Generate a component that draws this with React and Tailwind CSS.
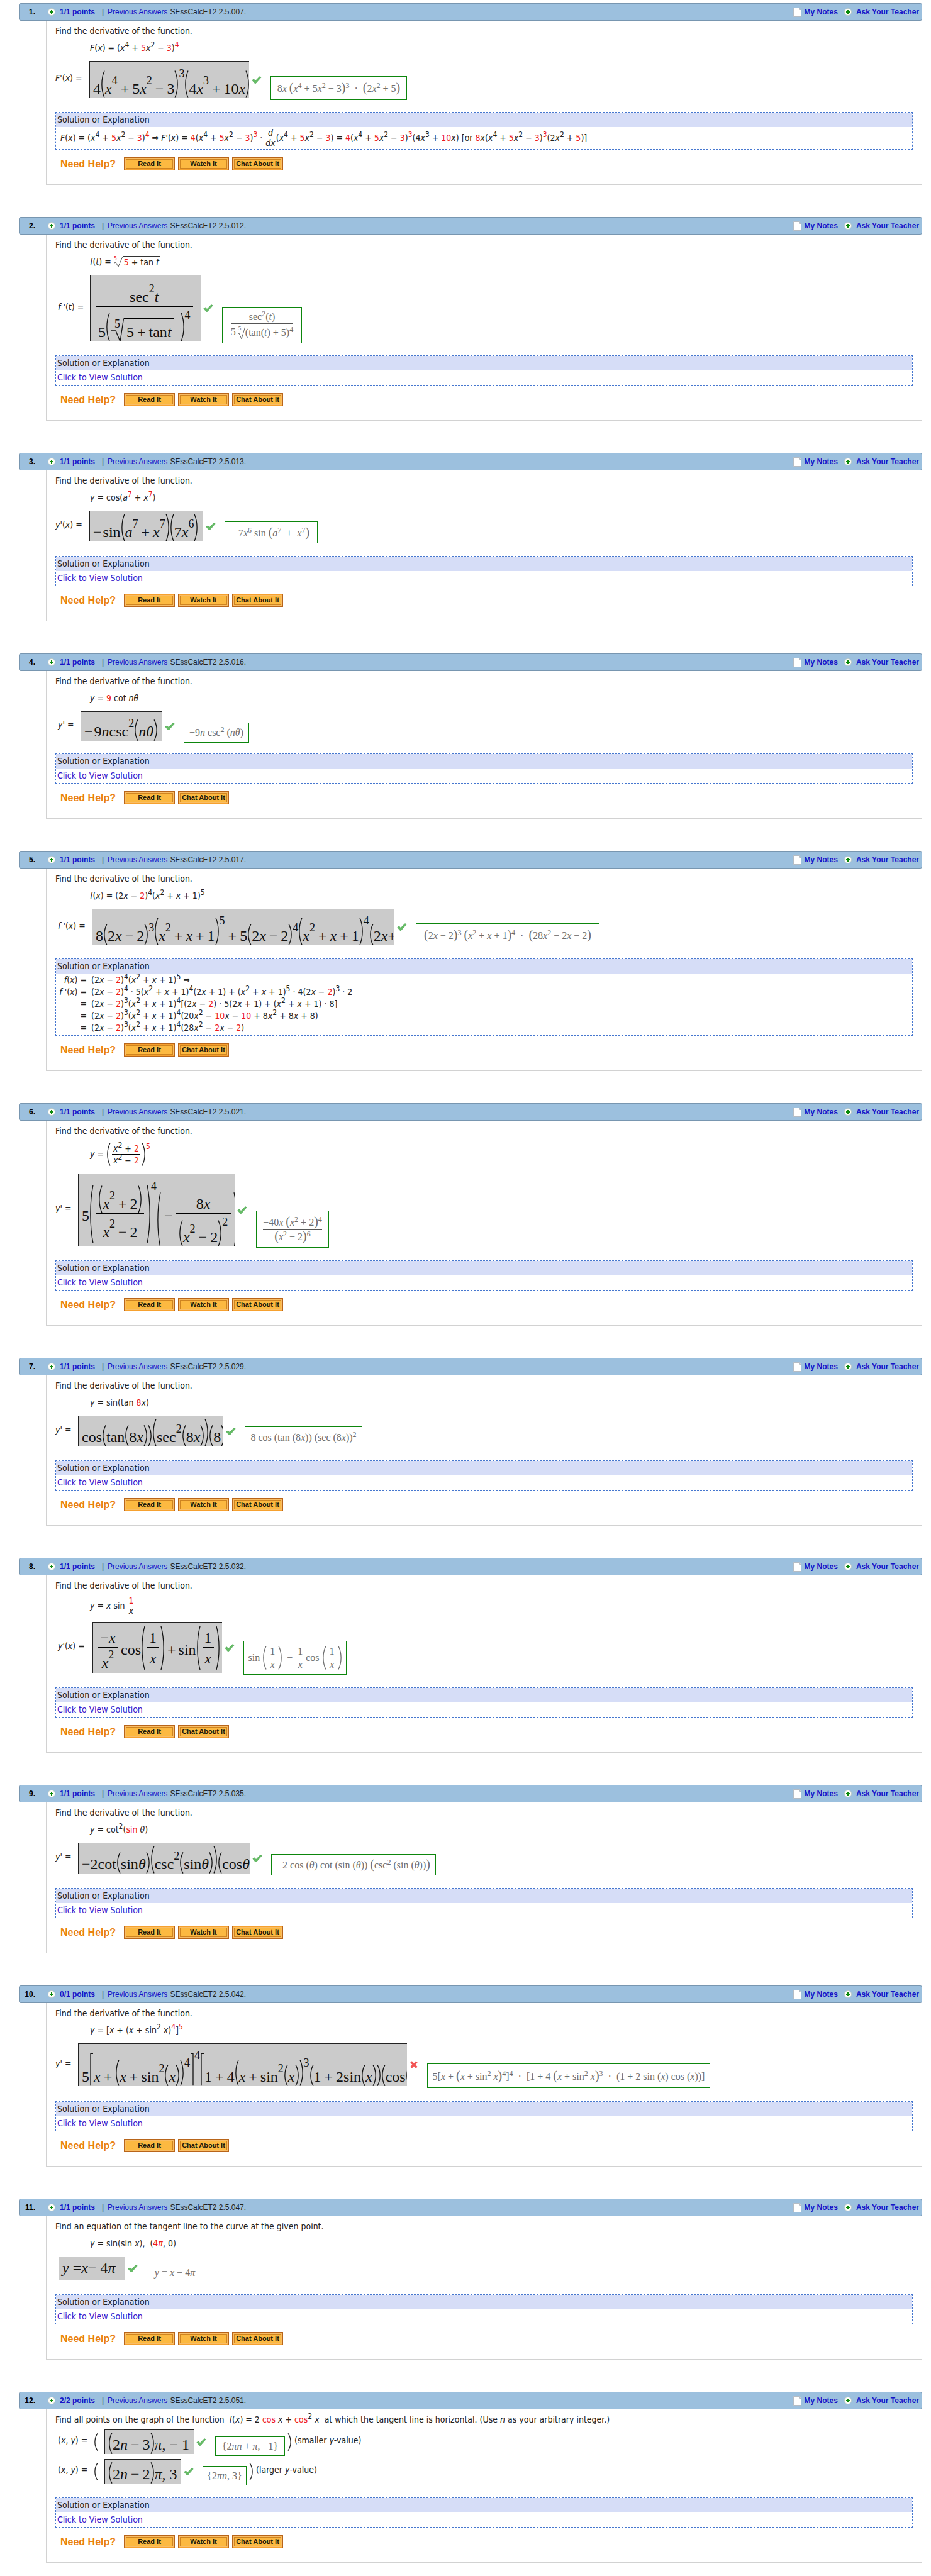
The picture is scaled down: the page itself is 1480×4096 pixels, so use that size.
import React from "react";

/* ---------- inline maths used in running text ---------- */

const Red = ({ children }) => <span className="text-[#ee1c1c]">{children}</span>;
const Up = ({ children }) => <sup className="text-[12px]">{children}</sup>;
const X = () => <i>x</i>;

/* ---------- stretched delimiters and root sign ---------- */

const shapes = {
  "(": "M6 0.5C0.5 12 0.5 28 6 39.5",
  ")": "M1 0.5C6.5 12 6.5 28 1 39.5",
  "[": "M6 1H2V39.5",
  "]": "M1 1H5V39.5",
};

function Fence({ c, h = "h-[34px]" }) {
  return (
    <svg
      role="img"
      aria-label={c}
      viewBox="0 0 7 40"
      preserveAspectRatio="none"
      className={`w-[7px] shrink-0 ${h}`}
    >
      <path d={shapes[c]} fill="none" stroke="currentColor" strokeWidth="1.3" vectorEffect="non-scaling-stroke" />
    </svg>
  );
}

/* ---------- maths inside the grey answer pads ---------- */

const T = ({ children }) => <span className="mb-[3px] leading-6">{children}</span>;
const V = ({ children }) => <i className="mb-[3px] leading-6">{children}</i>;
const Axis = ({ children }) => <span className="mt-[5px] leading-6">{children}</span>;
const Op = ({ children }) => <span className="mx-[5px] mb-[3px] leading-6">{children}</span>;
const Pow = ({ children, at = "mb-[19px]" }) => (
  <span className={`text-[18px] leading-[18px] ${at}`}>{children}</span>
);

function Frac({ top, bottom, h, className = "" }) {
  return (
    <span className={`flex flex-col items-stretch ${className}`}>
      <span className={`flex items-end justify-center border-b border-black ${h}`}>{top}</span>
      <span className={`flex items-end justify-center ${h}`}>{bottom}</span>
    </span>
  );
}

function Pad({ size, align = "items-end", inner = "h-full", children }) {
  return (
    <div className={`shrink-0 overflow-hidden border-l border-t border-[#222] bg-[#cbcbcb] ${size}`}>
      <div
        className={`flex w-max whitespace-nowrap pl-[5px] font-['Liberation_Serif',serif] text-[24px] text-[#111] ${align} ${inner}`}
      >
        {children}
      </div>
    </div>
  );
}

/* ---------- typeset key shown in the green frame ---------- */

const B = ({ children }) => <span className="text-[20px]">{children}</span>;
const K = ({ children }) => <sup className="text-[12px]">{children}</sup>;
const O = ({ children }) => <span className="mx-1">{children}</span>;

function Key({ size, children }) {
  return (
    <div
      className={`-mb-[3px] flex shrink-0 items-center justify-center self-end whitespace-nowrap border border-[#0d860d] font-['Liberation_Serif',serif] text-[16px] leading-5 text-[#6e6e6e] ${size}`}
    >
      {children}
    </div>
  );
}

function KeyFrac({ top, bottom, className = "" }) {
  return (
    <span className={`flex flex-col items-stretch text-center ${className}`}>
      <span className="border-b border-[#555]">{top}</span>
      <span>{bottom}</span>
    </span>
  );
}

/* ---------- small icons ---------- */

const Plus = () => (
  <svg viewBox="0 0 12 12" className="size-3 shrink-0" aria-hidden="true">
    <circle cx="6" cy="6" r="5.6" fill="#fdfdf8" stroke="#b9c6c0" strokeWidth="0.8" />
    <path d="M6 3v6M3 6h6" stroke="#0b8a0b" strokeWidth="2" />
  </svg>
);

const Note = () => (
  <svg viewBox="0 0 13 15" className="h-[15px] w-[13px] shrink-0" aria-hidden="true">
    <path d="M0.5 0.5H9.5L12.5 3.5V14.5H0.5Z" fill="#fff" stroke="#b4bcc4" />
    <path d="M9.5 0.5V3.5H12.5" fill="#dde3e8" stroke="#b4bcc4" />
  </svg>
);

const Check = () => (
  <svg viewBox="0 0 16 12" className="mr-[14px] ml-1 h-3 w-4 shrink-0" role="img" aria-label="Correct">
    <path d="M0.8 6.6L3.6 4.8L6 7.6L12.8 0.6L15.2 1.8L6.6 11.6H5Z" fill="#67bd67" stroke="#3f9f45" strokeWidth="0.6" />
  </svg>
);

const Cross = () => (
  <svg viewBox="0 0 14 12" className="mr-[14px] ml-1 h-3 w-[14px] shrink-0" role="img" aria-label="Incorrect">
    <path d="M2.5 1.5L11.5 10.5M11.5 1.5L2.5 10.5" stroke="#f25555" strokeWidth="3.6" />
  </svg>
);

/* ---------- page blocks ---------- */

const Label = ({ w, children }) => <div className={`shrink-0 whitespace-nowrap pb-1 ${w}`}>{children}</div>;

function HelpButton({ children }) {
  return (
    <button className="h-[21px] w-[81px] cursor-pointer whitespace-nowrap border border-[#b8651a] bg-[#f6a12f] p-[2px] font-['Liberation_Sans',sans-serif] text-[11px] font-bold leading-[13px] text-[#22190a]">
      <span className="block border border-[#cf8420] bg-[#fcb941] outline outline-[#fbd08a]/60">{children}</span>
    </button>
  );
}

function Problem({ p }) {
  return (
    <section>
      <header className="flex h-7 items-center rounded-[3px] border border-[#7896b0] bg-[#9cc0de] pr-1 font-['Liberation_Sans',sans-serif] text-[12px] font-bold text-[#1414c8]">
        <span className="w-[25px] text-right text-black">{p.no}.</span>
        <span className="ml-5">
          <Plus />
        </span>
        <a href="#points" className="ml-[7px] w-[67px]">
          {p.points}
        </a>
        <span className="w-[9px] font-normal text-[#333]">|</span>
        <a href="#previous" className="mr-1 font-normal">
          Previous Answers
        </a>
        <span className="font-normal text-[#222]">SEssCalcET2 2.5.{p.code}.</span>
        <a href="#notes" className="ml-auto flex items-center gap-[5px]">
          <Note />
          My Notes
        </a>
        <a href="#ask" className="ml-[10px] flex items-center gap-[7px]">
          <Plus />
          Ask Your Teacher
        </a>
      </header>
      <div className="ml-[43px] border-x border-b border-[#d2d2d2] px-[14px] pt-[7px] pb-[22px]">
        <p className="h-[18px] whitespace-nowrap leading-[18px]">{p.question || "Find the derivative of the function."}</p>
        {p.formula && (
          <div className={`mb-[3px] flex items-center whitespace-nowrap pl-[55px] ${p.formulaH || "h-9"}`}>
            <div className="flex items-center">{p.formula}</div>
          </div>
        )}
        {p.answer}
        <div className="border border-dashed border-[#4677cf]">
          <h3 className="h-[23px] bg-[#d6ddf7] pl-[2px] leading-[23px]">Solution or Explanation</h3>
          {p.solution || (
            <div className="h-[23px] pl-[2px] leading-[23px]">
              <a href="#solution" className="text-[#3316cc]">
                Click to View Solution
              </a>
            </div>
          )}
        </div>
        <div className="mt-3 flex h-[21px] items-center gap-[5px]">
          <span className="w-[104px] pl-2 font-['Liberation_Sans',sans-serif] text-[16px] font-bold text-[#ea820f]">
            Need Help?
          </span>
          <HelpButton>Read It</HelpButton>
          {p.watch && <HelpButton>Watch It</HelpButton>}
          <HelpButton>Chat About It</HelpButton>
        </div>
      </div>
    </section>
  );
}

/* repeated pieces of problems 1 and 5 */
const Lin = () => (
  <>
    (2<X /> − <Red>2</Red>)
  </>
);
const Quad = () => (
  <>
    (<X /><Up>2</Up> + <X /> + 1)
  </>
);
const Inner = () => (
  <>
    (<X /><Up>4</Up> + <Red>5</Red><X /><Up>2</Up> − <Red>3</Red>)
  </>
);

const problems = [
  {
    no: 1,
    points: "1/1 points",
    code: "007",
    watch: true,
    formula: (
      <span>
        <i>F</i>(<X />) = <Inner /><Up><Red>4</Red></Up>
      </span>
    ),
    answer: (
      <div className="mb-[22px] flex items-center">
        <Label w="w-[54px]"><i>F</i>'(<X />) =</Label>
        <Pad size="h-[59px] w-[254px]">
          <T>4</T><Fence c="(" h="h-[44px]" /><V>x</V><Pow>4</Pow><Op>+</Op><T>5<i>x</i></T><Pow>2</Pow><Op>−</Op><T>3</T>
          <Fence c=")" h="h-[44px]" /><Pow at="mb-[30px]">3</Pow><Fence c="(" h="h-[44px]" />
          <T>4<i>x</i></T><Pow>3</Pow><Op>+</Op><T>10<i>x</i></T><Fence c=")" h="h-[44px]" />
        </Pad>
        <Check />
        <Key size="h-[38px] w-[217px]">
          <span>8<i>x</i> <B>(</B><i>x</i><K>4</K><O>+</O>5<i>x</i><K>2</K><O>−</O>3<B>)</B><K>3</K> <O>·</O> <B>(</B>2<i>x</i><K>2</K><O>+</O>5<B>)</B></span>
        </Key>
      </div>
    ),
    solution: (
      <div className="flex h-[35px] items-center whitespace-nowrap pl-[7px]">
        <span>
          <i>F</i>(<X />) = <Inner /><Up><Red>4</Red></Up> ⇒ <i>F</i>'(<X />) = <Red>4</Red><Inner /><Up><Red>3</Red></Up> ·&nbsp;
        </span>
        <span className="flex flex-col px-px text-center italic leading-[15px]">
          <span className="border-b border-black">d</span>
          <span>dx</span>
        </span>
        <span>
          <Inner /> = <Red>4</Red><Inner /><Up><Red>3</Red></Up>(4<X /><Up>3</Up> + <Red>10</Red><X />) [or <Red>8</Red><X />
          <Inner /><Up><Red>3</Red></Up>(2<X /><Up>2</Up> + <Red>5</Red>)]
        </span>
      </div>
    ),
  },
  {
    no: 2,
    points: "1/1 points",
    code: "012",
    watch: true,
    formula: (
      <>
        <i>f</i>(<i>t</i>) =&nbsp;
        <span className="relative flex h-[18px] w-[14px]">
          <span className="absolute top-0 left-0 text-[9px] leading-[9px] text-[#ee1c1c]">5</span>
          <svg viewBox="0 0 14 18" className="h-[18px] w-[14px]" aria-hidden="true">
            <path d="M1 11L3 10L7 17L14 1" fill="none" stroke="#555" />
          </svg>
        </span>
        <span className="h-[18px] border-t border-[#333] px-[2px] leading-[18px]">
          <Red>5</Red> + tan <i>t</i>
        </span>
      </>
    ),
    answer: (
      <div className="mb-[22px] flex items-center">
        <Label w="w-[55px] pl-1"><i>f</i> '(<i>t</i>) =</Label>
        <Pad size="h-[106px] w-[176px]" align="items-start" inner="pl-[8px]">
          <span className="flex flex-col items-stretch">
            <span className="flex h-[50px] items-end justify-center border-b border-black">
              <T>sec</T><Pow>2</Pow><V>t</V>
            </span>
            <span className="flex h-[55px] items-end px-1">
              <T>5</T><Fence c="(" h="h-[46px]" />
              <span className="relative ml-[2px] flex items-end">
                <span className="absolute top-0 left-[5px] text-[18px] leading-[18px]">5</span>
                <svg viewBox="0 0 20 37" className="h-[37px] w-5" aria-hidden="true">
                  <path d="M0 20H7L14 37L19.5 0.5" fill="none" stroke="#111" strokeWidth="1.3" />
                </svg>
                <span className="flex h-[37px] items-end border-t border-black px-1">
                  <T>5</T><Op>+</Op><T>tan</T><V>t</V>
                </span>
              </span>
              <span className="w-[10px]" />
              <Fence c=")" h="h-[46px]" /><Pow at="mb-[33px]">4</Pow>
            </span>
          </span>
        </Pad>
        <Check />
        <Key size="h-[58px] w-[127px]">
          <KeyFrac
            top={<>sec<K>2</K>(<i>t</i>)</>}
            bottom={
              <span className="flex pt-[3px]">
                5
                <span className="relative flex w-[15px] shrink-0">
                  <span className="absolute top-0 left-1 text-[9px] leading-[9px]">5</span>
                  <svg viewBox="0 0 15 22" className="h-[22px] w-[15px]" aria-hidden="true">
                    <path d="M3 13L5 12L9 21L15 0.5" fill="none" stroke="#666" />
                  </svg>
                </span>
                <span className="border-t border-[#555]">(tan(<i>t</i>) + 5)<K>4</K></span>
              </span>
            }
          />
        </Key>
      </div>
    ),
  },
  {
    no: 3,
    points: "1/1 points",
    code: "013",
    watch: true,
    formula: (
      <span>
        <i>y</i> = cos(<i>a</i><Up><Red>7</Red></Up> + <X /><Up><Red>7</Red></Up>)
      </span>
    ),
    answer: (
      <div className="mb-[23px] flex items-center">
        <Label w="w-[54px]"><i>y</i>'(<X />) =</Label>
        <Pad size="h-[49px] w-[181px]">
          <T>−</T><span className="w-[2px]" /><T>sin</T><Fence c="(" h="h-[44px]" /><V>a</V><Pow>7</Pow><Op>+</Op><V>x</V><Pow>7</Pow>
          <Fence c=")" h="h-[44px]" /><Fence c="(" h="h-[44px]" /><T>7<i>x</i></T><Pow>6</Pow><Fence c=")" h="h-[44px]" />
        </Pad>
        <Check />
        <Key size="h-[35px] w-[148px]">
          <span>−7<i>x</i><K>6</K> sin <B>(</B><i>a</i><K>7</K><O> + </O><i>x</i><K>7</K><B>)</B></span>
        </Key>
      </div>
    ),
  },
  {
    no: 4,
    points: "1/1 points",
    code: "016",
    formula: (
      <span>
        <i>y</i> = <Red>9</Red> cot <i>nθ</i>
      </span>
    ),
    answer: (
      <div className="mb-5 flex items-center">
        <Label w="w-10 pl-1"><i>y</i>' =</Label>
        <Pad size="h-[47px] w-[130px]">
          <T>−</T><span className="w-[2px]" /><T>9<i>n</i>csc</T><Pow>2</Pow><Fence c="(" /><V>nθ</V><Fence c=")" />
        </Pad>
        <Check />
        <Key size="h-8 w-[104px]">
          <span>−9<i>n</i> csc<K>2</K> (<i>nθ</i>)</span>
        </Key>
      </div>
    ),
  },
  {
    no: 5,
    points: "1/1 points",
    code: "017",
    formula: (
      <span>
        <i>f</i>(<X />) = <Lin /><Up>4</Up><Quad /><Up>5</Up>
      </span>
    ),
    answer: (
      <div className="mb-[21px] flex items-center">
        <Label w="w-[58px] pl-1"><i>f</i> '(<X />) =</Label>
        <Pad size="h-[58px] w-[481px]">
          <T>8</T><Fence c="(" /><T>2<i>x</i></T><Op>−</Op><T>2</T><Fence c=")" /><Pow>3</Pow>
          <Fence c="(" h="h-[44px]" /><V>x</V><Pow>2</Pow><Op>+</Op><V>x</V><Op>+</Op><T>1</T><Fence c=")" h="h-[44px]" /><Pow at="mb-[30px]">5</Pow>
          <Op>+</Op><T>5</T><Fence c="(" /><T>2<i>x</i></T><Op>−</Op><T>2</T><Fence c=")" /><Pow>4</Pow>
          <Fence c="(" h="h-[44px]" /><V>x</V><Pow>2</Pow><Op>+</Op><V>x</V><Op>+</Op><T>1</T><Fence c=")" h="h-[44px]" /><Pow at="mb-[30px]">4</Pow>
          <Fence c="(" /><T>2<i>x</i>+</T>
        </Pad>
        <Check />
        <Key size="h-[38px] w-[292px]">
          <span>
            <B>(</B>2<i>x</i><O>−</O>2<B>)</B><K>3</K> <B>(</B><i>x</i><K>2</K><O>+</O><i>x</i><O>+</O>1<B>)</B><K>4</K> <O>·</O> <B>(</B>28<i>x</i><K>2</K><O>−</O>2<i>x</i><O>−</O>2<B>)</B>
          </span>
        </Key>
      </div>
    ),
    solution: (
      <div className="grid grid-cols-[49px_1fr] gap-x-[7px] whitespace-nowrap pt-[1px] pb-[2px] leading-[19px]">
        <span className="text-right"><i>f</i>(<X />) =</span>
        <span><Lin /><Up>4</Up><Quad /><Up>5</Up> ⇒</span>
        <span className="text-right"><i>f</i> '(<X />) =</span>
        <span><Lin /><Up>4</Up> · 5<Quad /><Up>4</Up>(2<X /> + 1) + <Quad /><Up>5</Up> · 4<Lin /><Up>3</Up> · 2</span>
        <span className="text-right">=</span>
        <span><Lin /><Up>3</Up><Quad /><Up>4</Up>[<Lin /> · 5(2<X /> + 1) + <Quad /> · 8]</span>
        <span className="text-right">=</span>
        <span><Lin /><Up>3</Up><Quad /><Up>4</Up>(20<X /><Up>2</Up> − <Red>10</Red><X /> − <Red>10</Red> + 8<X /><Up>2</Up> + 8<X /> + 8)</span>
        <span className="text-right">=</span>
        <span><Lin /><Up>3</Up><Quad /><Up>4</Up>(28<X /><Up>2</Up> − <Red>2</Red><X /> − <Red>2</Red>)</span>
      </div>
    ),
  },
  {
    no: 6,
    points: "1/1 points",
    code: "021",
    watch: true,
    formulaH: "h-[56px]",
    formula: (
      <>
        <i>y</i>&nbsp;=&nbsp;
        <Fence c="(" h="h-[37px]" />
        <span className="flex flex-col px-[2px] leading-[18px]">
          <span className="border-b border-black px-[2px]"><X /><Up>2</Up> + <Red>2</Red></span>
          <span className="px-[2px]"><X /><Up>2</Up> − <Red>2</Red></span>
        </span>
        <Fence c=")" h="h-[37px]" />
        <span className="self-start text-[12px] leading-[12px] text-[#ee1c1c]">5</span>
      </>
    ),
    answer: (
      <div className="mb-[23px] flex items-center">
        <Label w="w-9"><i>y</i>' =</Label>
        <Pad size="h-[115px] w-[249px]" align="items-center" inner="h-[126px]">
          <Axis>5</Axis><Fence c="(" h="h-[95px]" />
          <Frac
            h="h-11"
            className="mx-1 w-[76px]"
            top={<><Fence c="(" h="h-[44px]" /><V>x</V><Pow>2</Pow><Op>+</Op><T>2</T><Fence c=")" h="h-[44px]" /></>}
            bottom={<><V>x</V><Pow>2</Pow><Op>−</Op><T>2</T></>}
          />
          <Fence c=")" h="h-[95px]" />
          <span className="mt-[10px] self-start text-[18px] leading-[18px]">4</span>
          <Fence c="(" h="mt-5 h-[90px]" />
          <span className="mx-[5px] mt-[5px] leading-6">−</span>
          <Frac
            h="h-[52px]"
            className="w-[87px]"
            top={<T>8<i>x</i></T>}
            bottom={<><Fence c="(" h="h-[42px]" /><V>x</V><Pow>2</Pow><Op>−</Op><T>2</T><Fence c=")" h="h-[42px]" /><Pow at="mb-[30px]">2</Pow></>}
          />
          <Fence c=")" h="ml-1 mt-5 h-[90px]" />
        </Pad>
        <Check />
        <Key size="h-[59px] w-[116px]">
          <KeyFrac
            top={<>−40<i>x</i> <B>(</B><i>x</i><K>2</K><O>+</O>2<B>)</B><K>4</K></>}
            bottom={<><B>(</B><i>x</i><K>2</K><O>−</O>2<B>)</B><K>6</K></>}
          />
        </Key>
      </div>
    ),
  },
  {
    no: 7,
    points: "1/1 points",
    code: "029",
    watch: true,
    formula: (
      <span>
        <i>y</i> = sin(tan <Red>8</Red><X />)
      </span>
    ),
    answer: (
      <div className="mb-[22px] flex items-center">
        <Label w="w-9"><i>y</i>' =</Label>
        <Pad size="h-[49px] w-[231px]">
          <T>cos</T><Fence c="(" /><T>tan</T><Fence c="(" /><T>8<i>x</i></T><Fence c=")" /><Fence c=")" />
          <Fence c="(" h="h-[44px]" /><T>sec</T><Pow>2</Pow><Fence c="(" /><T>8<i>x</i></T><Fence c=")" /><Fence c=")" h="h-[44px]" />
          <Fence c="(" /><T>8</T><Fence c=")" />
        </Pad>
        <Check />
        <Key size="h-[35px] w-[187px]">
          <span>8 cos (tan (8<i>x</i>)) (sec (8<i>x</i>))<K>2</K></span>
        </Key>
      </div>
    ),
  },
  {
    no: 8,
    points: "1/1 points",
    code: "032",
    formulaH: "h-[46px]",
    formula: (
      <>
        <i>y</i>&nbsp;=&nbsp;<X />&nbsp;sin&nbsp;
        <span className="flex w-3 flex-col text-center leading-[15px]">
          <span className="border-b border-black text-[#ee1c1c]">1</span>
          <X />
        </span>
      </>
    ),
    answer: (
      <div className="mb-[23px] flex items-center">
        <Label w="w-[59px] pl-1"><i>y</i>'(<X />) =</Label>
        <Pad size="h-[81px] w-[206px]" align="items-center">
          <Frac h="h-[39px]" className="ml-[2px] mr-1 w-[33px]" top={<T>−<i>x</i></T>} bottom={<><V>x</V><Pow>2</Pow></>} />
          <Axis>cos</Axis>
          <Fence c="(" h="h-[71px]" />
          <Frac h="h-8" className="mx-[3px] w-[18px]" top={<T>1</T>} bottom={<V>x</V>} />
          <Fence c=")" h="h-[71px]" />
          <span className="mx-1 mt-[5px] leading-6">+</span>
          <Axis>sin</Axis>
          <Fence c="(" h="h-[71px]" />
          <Frac h="h-8" className="mx-[3px] w-[18px]" top={<T>1</T>} bottom={<V>x</V>} />
          <Fence c=")" h="h-[71px]" />
        </Pad>
        <Check />
        <Key size="h-[54px] w-[164px]">
          sin&nbsp;
          <Fence c="(" h="h-[38px]" />
          <KeyFrac className="mx-1 w-[10px]" top="1" bottom={<i>x</i>} />
          <Fence c=")" h="h-[38px]" />
          <span className="mx-[7px]">−</span>
          <KeyFrac className="mr-1 w-[10px]" top="1" bottom={<i>x</i>} />
          cos&nbsp;
          <Fence c="(" h="h-[38px]" />
          <KeyFrac className="mx-1 w-[10px]" top="1" bottom={<i>x</i>} />
          <Fence c=")" h="h-[38px]" />
        </Key>
      </div>
    ),
  },
  {
    no: 9,
    points: "1/1 points",
    code: "035",
    watch: true,
    formula: (
      <span>
        <i>y</i> = cot<Up>2</Up>(<Red>sin</Red> <i>θ</i>)
      </span>
    ),
    answer: (
      <div className="mb-[23px] flex items-center">
        <Label w="w-9"><i>y</i>' =</Label>
        <Pad size="h-[49px] w-[273px]">
          <T>−2cot</T><Fence c="(" /><T>sin<i>θ</i></T><Fence c=")" /><Fence c="(" h="h-[44px]" /><T>csc</T><Pow>2</Pow>
          <Fence c="(" /><T>sin<i>θ</i></T><Fence c=")" /><Fence c=")" h="h-[44px]" /><Fence c="(" /><T>cos<i>θ</i></T>
        </Pad>
        <Check />
        <Key size="h-[34px] w-[262px]">
          <span>−2 cos (<i>θ</i>) cot (sin (<i>θ</i>)) <B>(</B>csc<K>2</K> (sin (<i>θ</i>))<B>)</B></span>
        </Key>
      </div>
    ),
  },
  {
    no: 10,
    points: "0/1 points",
    code: "042",
    formula: (
      <span>
        <i>y</i> = [<X /> + (<X /> + sin<Up>2</Up> <X />)<Up><Red>4</Red></Up>]<Up><Red>5</Red></Up>
      </span>
    ),
    answer: (
      <div className="mb-6 flex items-center">
        <Label w="w-9"><i>y</i>' =</Label>
        <Pad size="h-[68px] w-[523px]">
          <T>5</T><Fence c="[" h="h-[53px]" /><V>x</V><Op>+</Op><Fence c="(" h="h-[42px]" /><V>x</V><Op>+</Op><T>sin</T><Pow>2</Pow>
          <Fence c="(" /><V>x</V><Fence c=")" /><Fence c=")" h="h-[42px]" /><Pow at="mb-[28px]">4</Pow>
          <Fence c="]" h="h-[53px]" /><Pow at="mb-[40px]">4</Pow>
          <Fence c="[" h="h-[53px]" /><T>1</T><Op>+</Op><T>4</T><Fence c="(" h="h-[42px]" /><V>x</V><Op>+</Op><T>sin</T><Pow>2</Pow>
          <Fence c="(" /><V>x</V><Fence c=")" /><Fence c=")" h="h-[42px]" /><Pow at="mb-[28px]">3</Pow>
          <Fence c="(" /><T>1</T><Op>+</Op><T>2sin</T><Fence c="(" /><V>x</V><Fence c=")" /><Fence c=")" /><Fence c="(" /><T>cos</T><Fence c="(" />
        </Pad>
        <Cross />
        <Key size="h-[39px] w-[450px]">
          <span>
            5[<i>x</i><O>+</O><B>(</B><i>x</i><O>+</O>sin<K>2</K> <i>x</i><B>)</B><K>4</K>]<K>4</K> <O>·</O> [1<O>+</O>4 <B>(</B><i>x</i><O>+</O>sin<K>2</K> <i>x</i><B>)</B><K>3</K> <O>·</O> (1<O>+</O>2 sin (<i>x</i>) cos (<i>x</i>))]
          </span>
        </Key>
      </div>
    ),
  },
  {
    no: 11,
    points: "1/1 points",
    code: "047",
    watch: true,
    question: "Find an equation of the tangent line to the curve at the given point.",
    formula: (
      <span>
        <i>y</i> = sin(sin <X />),&nbsp; (<Red>4<i>π</i></Red>, 0)
      </span>
    ),
    answer: (
      <div className="mb-[22px] flex items-center pl-[5px]">
        <Pad size="h-[38px] w-[106px]" align="items-center">
          <T><i>y</i> =<i>x</i>− 4<i>π</i></T>
        </Pad>
        <Check />
        <Key size="h-[31px] w-[90px]">
          <span><i>y</i><O>=</O><i>x</i><O>−</O>4<i>π</i></span>
        </Key>
      </div>
    ),
  },
  {
    no: 12,
    points: "2/2 points",
    code: "051",
    watch: true,
    question: (
      <>
        Find all points on the graph of the function &nbsp;<i>f</i>(<X />) = 2 <Red>cos</Red> <X /> + <Red>cos</Red><Up>2</Up> <X />&nbsp; at
        which the tangent line is horizontal. (Use <i>n</i> as your arbitrary integer.)
      </>
    ),
    answer: (
      <div className="mt-[7px] mb-[22px] flex flex-col gap-2">
        <div className="flex items-center">
          <Label w="w-[61px] pl-1">(<X />, <i>y</i>) =</Label>
          <Fence c="(" h="mr-[10px] h-7" />
          <Pad size="h-[39px] w-[142px]">
            <Fence c="(" /><T>2<i>n</i></T><Op>−</Op><T>3</T><Fence c=")" /><T><i>π</i>, − 1</T>
          </Pad>
          <Check />
          <Key size="h-[31px] w-[111px]">
            <span>{"{"}2<i>πn</i><O>+</O><i>π</i>, −1{"}"}</span>
          </Key>
          <Fence c=")" h="mx-1 h-7" />
          <span className="pb-1">(smaller <i>y</i>-value)</span>
        </div>
        <div className="flex items-center">
          <Label w="w-[61px] pl-1">(<X />, <i>y</i>) =</Label>
          <Fence c="(" h="mr-[10px] h-7" />
          <Pad size="h-[39px] w-[122px]">
            <Fence c="(" /><T>2<i>n</i></T><Op>−</Op><T>2</T><Fence c=")" /><T><i>π</i>, 3</T>
          </Pad>
          <Check />
          <Key size="h-[31px] w-[70px]">
            <span>{"{"}2<i>πn</i>, 3{"}"}</span>
          </Key>
          <Fence c=")" h="mx-1 h-7" />
          <span className="pb-1">(larger <i>y</i>-value)</span>
        </div>
      </div>
    ),
  },
];

export default function App() {
  return (
    <main className="flex flex-col gap-[51px] bg-white pt-[5px] pr-[14px] pb-5 pl-[30px] font-['DejaVu_Sans_Condensed','Noto_Sans',sans-serif] text-[14px] text-[#222]">
      {problems.map((p) => (
        <Problem key={p.no} p={p} />
      ))}
    </main>
  );
}
